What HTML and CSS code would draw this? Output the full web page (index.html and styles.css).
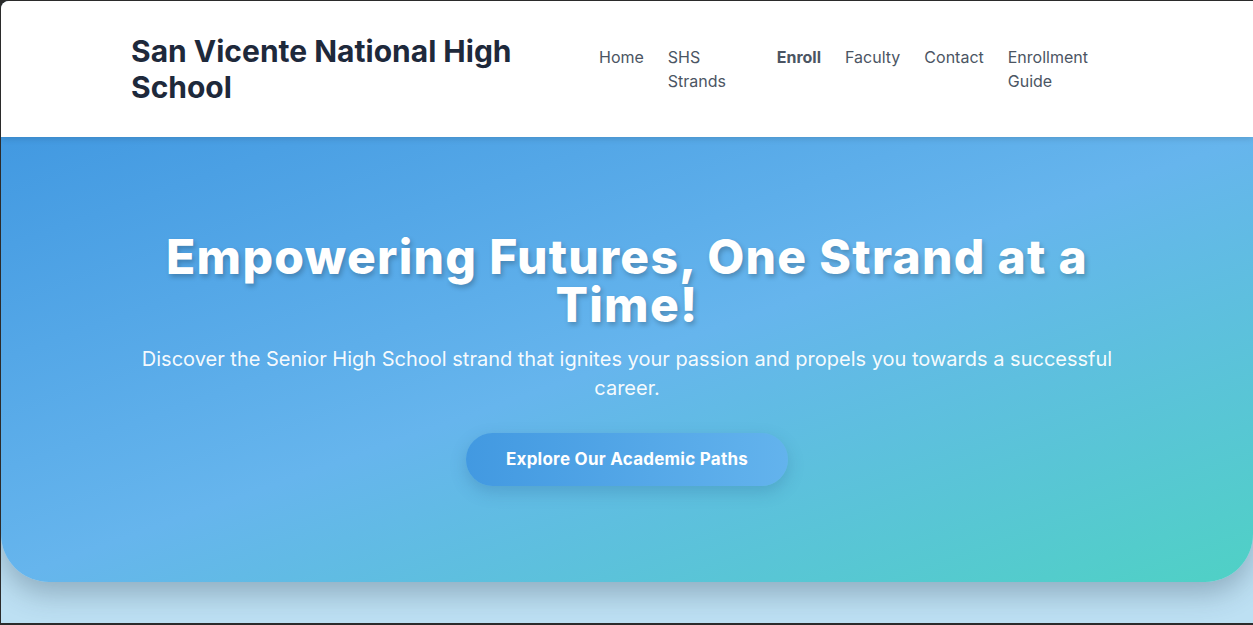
FILE: index.html
```html
<!DOCTYPE html>
<html lang="en">
<head>
<meta charset="utf-8">
<title>San Vicente National High School</title>
<link rel="stylesheet" href="styles.css">
</head>
<body>
<header class="site-header">
  <div class="container header-inner">
    <h1 class="brand">San Vicente National High School</h1>
    <nav class="main-nav">
      <ul class="nav-list">
        <li class="nav-item"><a href="#">Home</a></li>
        <li class="nav-item"><a href="#">SHS Strands</a></li>
        <li class="nav-item"><a class="active" href="#">Enroll</a></li>
        <li class="nav-item"><a href="#">Faculty</a></li>
        <li class="nav-item"><a href="#">Contact</a></li>
        <li class="nav-item"><a href="#">Enrollment Guide</a></li>
      </ul>
    </nav>
  </div>
</header>
<main>
  <section class="hero">
    <div class="hero-content">
      <h2 class="hero-title">Empowering Futures, One Strand at a Time!</h2>
      <p class="hero-sub">Discover the Senior High School strand that ignites your passion and propels you towards a successful career.</p>
      <a class="hero-btn" href="#">Explore Our Academic Paths</a>
    </div>
  </section>
</main>
</body>
</html>
```
FILE: styles.css
```css
* { box-sizing: border-box; }

html {
  height: 100%;
  background: #2b2b2b;
}

body {
  margin: 1px 0 0 1px;
  height: calc(100vh - 3px);
  background: #bde0f3;
  border-top-left-radius: 8px;
  overflow: hidden;
  font-family: Inter, "Noto Sans", sans-serif;
}

.container {
  max-width: 1024px;
  margin: 0 auto;
  padding: 0 16px;
}

.site-header {
  position: relative;
  z-index: 2;
  background: #ffffff;
  padding: 32px 0;
  box-shadow: 0 2px 6px rgba(0, 0, 0, 0.12);
}

.header-inner {
  display: flex;
  align-items: center;
  gap: 24px;
}

.brand {
  flex: 0 0 444px;
  margin: 0;
  font-size: 30px;
  line-height: 36px;
  font-weight: 700;
  color: #1e293b;
}

.main-nav { flex: 1 1 auto; min-width: 0; }

.nav-list {
  list-style: none;
  margin: 0;
  padding: 0;
  display: flex;
  gap: 24px;
}

.nav-item a {
  display: block;
  color: #4b5563;
  text-decoration: none;
  font-size: 16px;
  line-height: 24px;
}

.nav-item a.active {
  font-weight: 700;
}

.hero {
  position: relative;
  z-index: 1;
  padding: 96px 0;
  background: linear-gradient(to bottom right, #4299e1 0%, #66b5ed 50%, #4fd1c5 100%);
  border-radius: 0 0 48px 48px;
  box-shadow: 0 12px 28px rgba(40, 60, 80, 0.3);
  text-align: center;
  color: #ffffff;
}

.hero-content {
  max-width: 1000px;
  margin: 0 auto;
}

.hero-title {
  margin: 0 auto 16px;
  max-width: 980px;
  font-family: Inter, sans-serif;
  font-weight: 800;
  font-size: 48px;
  line-height: 48px;
  letter-spacing: 1.3px;
  text-shadow: 2px 3px 5px rgba(0, 0, 0, 0.22);
}

.hero-sub {
  margin: 0 auto 30px;
  font-size: 20px;
  line-height: 29px;
  color: rgba(255, 255, 255, 0.96);
}

.hero-btn {
  display: inline-block;
  padding: 16px 40px;
  border-radius: 9999px;
  background: linear-gradient(90deg, #4299e1, #63b3ed);
  color: #ffffff;
  font-weight: 700;
  font-size: 17px;
  line-height: 21px;
  letter-spacing: 0.25px;
  text-decoration: none;
  box-shadow: 0 6px 16px rgba(40, 90, 140, 0.25);
}
```
